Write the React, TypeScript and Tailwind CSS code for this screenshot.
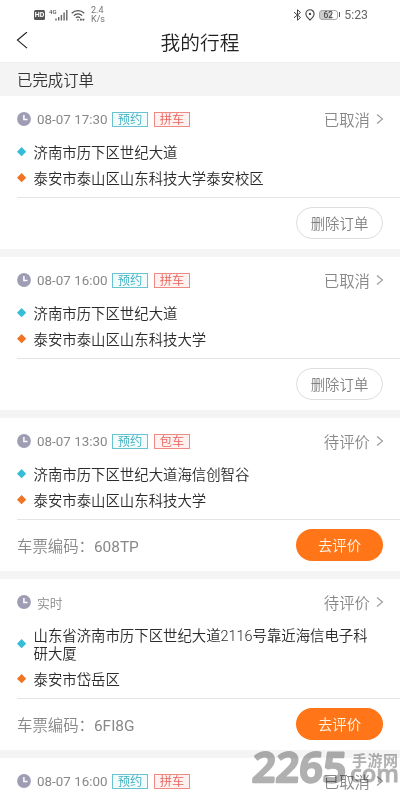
import React from "react";

const orders = [
  {
    time: "08-07 17:30",
    tags: ["预约", "拼车"],
    status: "已取消",
    from: "济南市历下区世纪大道",
    to: "泰安市泰山区山东科技大学泰安校区",
  },
  {
    time: "08-07 16:00",
    tags: ["预约", "拼车"],
    status: "已取消",
    from: "济南市历下区世纪大道",
    to: "泰安市泰山区山东科技大学",
  },
  {
    time: "08-07 13:30",
    tags: ["预约", "包车"],
    status: "待评价",
    from: "济南市历下区世纪大道海信创智谷",
    to: "泰安市泰山区山东科技大学",
    code: "608TP",
  },
  {
    time: "实时",
    tags: [],
    status: "待评价",
    from: "山东省济南市历下区世纪大道2116号靠近海信电子科研大厦",
    to: "泰安市岱岳区",
    code: "6FI8G",
  },
  {
    time: "08-07 16:00",
    tags: ["预约", "拼车"],
    status: "已取消",
    from: "济南市历下区世纪大道",
    to: "泰安市泰山区山东科技大学",
  },
];

function StatusBar() {
  return (
    <div className="flex h-[30px] items-center justify-between pr-8 pl-[34px] font-normal text-[#555]">
      <div className="flex items-center">
        <div className="flex h-[10px] w-[11px] items-center justify-center rounded-[1.5px] bg-[#555] text-[7px] leading-none font-bold text-white">
          HD
        </div>
        <svg className="ml-[4px]" width="20" height="14" viewBox="0 0 20 14">
          <text x="0" y="6" fontSize="6" fontWeight="500" fill="#555">
            4G
          </text>
          <path
            d="M7 10.5v2M9.7 9v3.5M12.4 7v5.500M15.1 4.500v8M17.8 2v10.500"
            stroke="#666"
            strokeWidth="1.4"
          />
        </svg>
        <svg className="ml-[2px]" width="14" height="13" viewBox="0 0 14 13" fill="none" stroke="#555" strokeWidth="1.2">
          <path d="M.7 4.2C4.2.8 9.8.8 13.3 4.2M2.8 6.6c2.4-2.3 6-2.3 8.4 0M4.9 8.9c1.2-1.2 3-1.2 4.2 0" />
          <path d="M5.8 10.5 7 12l1.2-1.5Z" fill="#555" stroke="none" />
          <path d="M9 10.7h4.500" strokeWidth="1.800" strokeDasharray="1.800 .7" />
        </svg>
        <div className="ml-[6px] text-[9px] leading-[9.5px] text-[#777]">
          <div>2.4</div>
          <div>K/s</div>
        </div>
      </div>
      <div className="flex items-center">
        <svg width="9" height="12" viewBox="0 0 9 12" fill="none" stroke="#444" strokeWidth="1">
          <path d="m1 3.2 6.5 5.3-3 2.7V.8l3 2.7L1 8.8" />
        </svg>
        <svg className="ml-[3px]" width="10" height="12" viewBox="0 0 10 12" fill="none" stroke="#444" strokeWidth="1.1">
          <path d="M5 11C2.4 8.6.9 6.9.9 4.9a4.1 4.1 0 0 1 8.2 0C9.1 6.9 7.6 8.6 5 11Z" />
          <circle cx="5" cy="4.9" r="1.2" fill="#444" stroke="none" />
        </svg>
        <div className="ml-[4px] flex h-[10px] w-[19px] items-center justify-center rounded-[3px] border border-[#aaa] bg-linear-to-r from-[#ccc] from-70% to-white to-70% text-[8.5px] leading-none text-[#333]">
          62
        </div>
        <div className="ml-px h-[5px] w-[1.5px] bg-[#555]" />
        <div className="ml-[4px] text-[12.3px] leading-none text-[#666]">5:23</div>
      </div>
    </div>
  );
}

function Clock() {
  return (
    <svg className="mb-px shrink-0" width="14" height="14" viewBox="0 0 14 14">
      <circle cx="7" cy="7" r="6.9" fill="#9f9db3" />
      <path d="M6.9 3v4.4h3.6" fill="none" stroke="#fff" strokeWidth="1.5" />
    </svg>
  );
}

function Diamond({ color }: { color: string }) {
  return (
    <svg className="shrink-0" width="10" height="10" viewBox="0 0 10 10">
      <path d="M4.6.1 9.2 4.7 4.6 9.3 0 4.7Z" fill={color} />
    </svg>
  );
}

function Place({ color, text }: { color: string; text: string }) {
  return (
    <div className="flex items-center gap-[6.5px]">
      <Diamond color={color} />
      <p className="-mb-0.5 w-[340px] pt-0.5 text-[14.4px] leading-[18px] text-[#2b2b2b]">{text}</p>
    </div>
  );
}

function OrderCard({ order }: { order: any }) {
  return (
    <div className="mb-2 shrink-0 bg-white px-[17px]">
      <div className="-mr-px flex h-[47px] items-center">
        <Clock />
        <span
          className={
            order.tags.length
              ? "ml-[6px] w-[75px] pt-px text-[13.4px] font-normal text-[#888]"
              : "ml-[6px] pt-[3px] text-[12.8px] text-[#888]"
          }
        >
          {order.time}
        </span>
        {order.tags.map((tag: string, i: number) => (
          <span
            key={tag}
            className={
              i === 0
                ? "mr-[6px] mb-px flex h-[15px] w-9 items-center justify-center border border-[#6cc3d0] bg-[#f2fcfd] pt-0.5 text-[12.3px] leading-none text-[#3fafc0]"
                : "mb-px flex h-[15px] w-9 items-center justify-center border border-[#ee8a84] bg-[#fff1f0] pt-0.5 text-[12.3px] leading-none text-[#e5625a]"
            }
          >
            {tag}
          </span>
        ))}
        <span className="ml-auto pt-1 text-[15.4px] text-[#888]">{order.status}</span>
        <svg className="mb-px ml-[6px]" width="8" height="12" viewBox="0 0 8 12" fill="none" stroke="#999" strokeWidth="1.1">
          <path d="m1 1.5 5.500 4.500L1 10.500" />
        </svg>
      </div>
      <div className="flex flex-col gap-2 pb-[10px]">
        <Place color="#35bcd6" text={order.from} />
        <Place color="#f07423" text={order.to} />
      </div>
      <div className="-mr-[17px] h-px bg-[#e4e4e4]" />
      <div className="flex h-[51px] items-center justify-between pb-px">
        {order.code ? (
          <>
            <span className="pt-[5px] text-[15.4px] text-[#888]">
              车票编码：<span className="font-normal">{order.code}</span>
            </span>
            <button className="h-8 w-[87px] rounded-full bg-[#ff7518] pt-1 text-[14.4px] text-[#fff6ea]">去评价</button>
          </>
        ) : (
          <button className="ml-auto h-8 w-[87px] rounded-full border border-[#ddd] pt-1 text-[14.4px] text-[#808080]">
            删除订单
          </button>
        )}
      </div>
    </div>
  );
}

function Watermark() {
  return (
    <svg
      className="absolute top-[745px] left-[246px] mix-blend-multiply"
      width="154"
      height="45"
      viewBox="0 0 154 45"
      fill="#b0b0b0"
      stroke="#b0b0b0"
      strokeLinejoin="round"
      fontFamily="'Open Sans', sans-serif"
    >
      <text
        x="5"
        y="37"
        fontSize="41"
        fontWeight="600"
        strokeWidth="2.5"
        textLength="94"
        lengthAdjust="spacingAndGlyphs"
        transform="skewX(-4) translate(3 0)"
      >
        2265
      </text>
      <text x="106" y="21" fontSize="15" fontWeight="700" strokeWidth="0" textLength="46" fontFamily="'Noto Sans CJK SC', sans-serif">
        手游网
      </text>
      <text x="104" y="37" fontSize="24" fontWeight="600" strokeWidth="0.8" textLength="49" lengthAdjust="spacingAndGlyphs">
        com
      </text>
    </svg>
  );
}

function App() {
  return (
    <div className="relative flex h-[800px] w-[400px] flex-col overflow-hidden bg-[#f4f4f4] font-[Roboto,'Noto_Sans_CJK_SC',sans-serif] font-[350]">
      <div className="h-[62px] shrink-0 bg-white">
        <StatusBar />
        <div className="grid h-5 grid-cols-3 items-center px-4">
          <svg width="12" height="18" viewBox="0 0 12 18" fill="none" stroke="#222" strokeWidth="1.2">
            <path d="M11 .1 1.500 8.100 11 16.100" />
          </svg>
          <h1 className="-mb-px pt-1 text-center text-[19.7px] leading-none whitespace-nowrap text-[#222]">我的行程</h1>
        </div>
      </div>
      <div className="flex h-[34px] shrink-0 items-center border-t border-[#eee] px-[17px] pt-1 text-[15.4px] text-[#333]">
        已完成订单
      </div>
      {orders.map((order, i) => (
        <OrderCard key={i} order={order} />
      ))}
      <Watermark />
    </div>
  );
}

export default App;
